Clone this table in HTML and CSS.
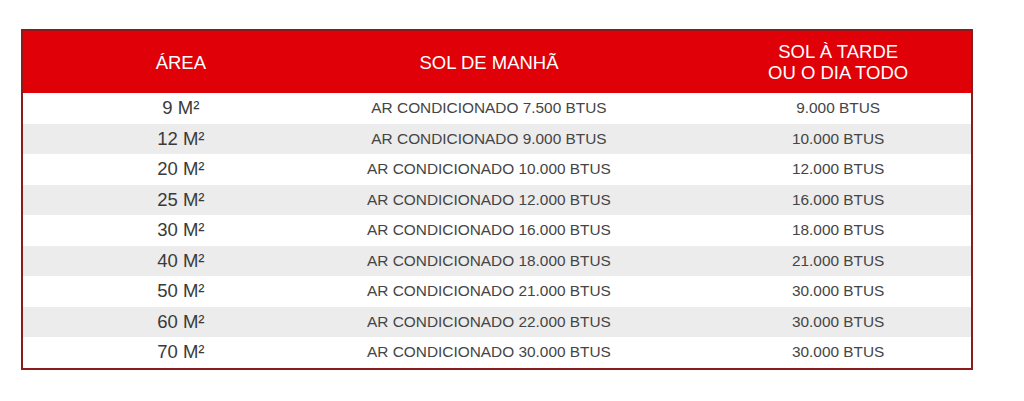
FILE: index.html
```html
<!DOCTYPE html>
<html>
<head>
<meta charset="utf-8">
<link rel="stylesheet" href="styles.css">
</head>
<body>
<table class="btu">
  <colgroup>
    <col class="c1"><col class="c2"><col class="c3">
  </colgroup>
  <thead>
    <tr>
      <th>ÁREA</th>
      <th>SOL DE MANHÃ</th>
      <th class="last">SOL À TARDE<br>OU O DIA TODO</th>
    </tr>
  </thead>
  <tbody>
    <tr><td class="area">9 M²</td><td>AR CONDICIONADO 7.500 BTUS</td><td class="last">9.000 BTUS</td></tr>
    <tr><td class="area">12 M²</td><td>AR CONDICIONADO 9.000 BTUS</td><td class="last">10.000 BTUS</td></tr>
    <tr><td class="area">20 M²</td><td>AR CONDICIONADO 10.000 BTUS</td><td class="last">12.000 BTUS</td></tr>
    <tr><td class="area">25 M²</td><td>AR CONDICIONADO 12.000 BTUS</td><td class="last">16.000 BTUS</td></tr>
    <tr><td class="area">30 M²</td><td>AR CONDICIONADO 16.000 BTUS</td><td class="last">18.000 BTUS</td></tr>
    <tr><td class="area">40 M²</td><td>AR CONDICIONADO 18.000 BTUS</td><td class="last">21.000 BTUS</td></tr>
    <tr><td class="area">50 M²</td><td>AR CONDICIONADO 21.000 BTUS</td><td class="last">30.000 BTUS</td></tr>
    <tr><td class="area">60 M²</td><td>AR CONDICIONADO 22.000 BTUS</td><td class="last">30.000 BTUS</td></tr>
    <tr><td class="area">70 M²</td><td>AR CONDICIONADO 30.000 BTUS</td><td class="last">30.000 BTUS</td></tr>
  </tbody>
</table>
</body>
</html>
```
FILE: styles.css
```css
html, body {
  margin: 0;
  padding: 0;
  background: #ffffff;
}
body {
  padding: 29px 0 0 21px;
  font-family: "Liberation Sans", Arial, Helvetica, sans-serif;
}
.btu {
  width: 952px;
  border: 2px solid #8e1b1b;
  border-collapse: collapse;
  table-layout: fixed;
}
.c1 { width: 316px; }
.c2 { width: 300px; }
.c3 { width: 332px; }
.btu th {
  background: #e00008;
  color: #ffffff;
  font-weight: normal;
  font-size: 18.5px;
  line-height: 21px;
  height: 62px;
  padding: 0;
  text-align: center;
  vertical-align: middle;
}
.btu td {
  color: #454545;
  font-size: 15.4px;
  line-height: 18px;
  height: 30.5px;
  padding: 0;
  text-align: center;
  vertical-align: middle;
}
.btu td.area {
  font-size: 18.5px;
  color: #3a3a3a;
}
.btu .last {
  padding-left: 66px;
}
.btu tbody tr:nth-child(even) td {
  background: #ececec;
}
```
